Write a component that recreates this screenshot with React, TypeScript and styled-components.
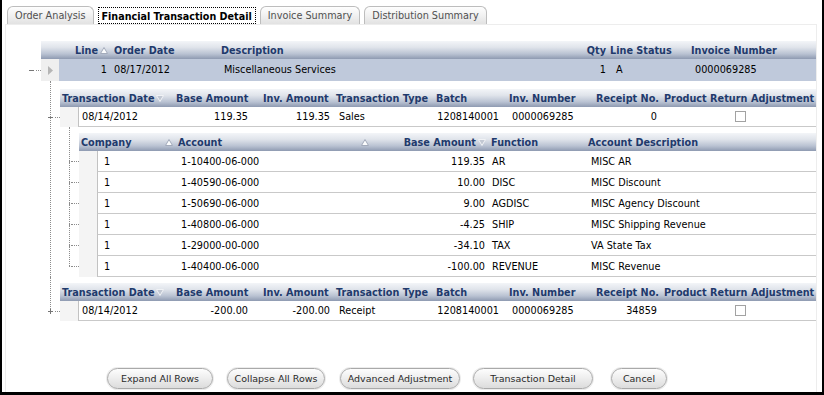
import React, { Fragment } from 'react'
import styled, { createGlobalStyle } from 'styled-components'

const GlobalStyle = createGlobalStyle`
  html, body { margin: 0; padding: 0; background: #fff; }
  body {
    font-family: 'DejaVu Sans', Verdana, sans-serif;
    font-size: 9.7px;
    color: #000;
  }
  * { box-sizing: border-box; }
`

type Align = 'l' | 'r' | 'c'
type Col = {
  label: string
  w: number
  ha?: Align
  da?: Align
  hp?: number
  hr?: number
  dp?: number
  sort?: 'up' | 'down'
  spread?: boolean
}

const GUT = 18
const jc = (a: Align = 'l') => (a === 'r' ? 'flex-end' : a === 'c' ? 'center' : 'flex-start')

// data rows start after the 18px gutter + 1px cell border
const template = (cols: Col[], data: boolean) =>
  cols
    .map((c, i) =>
      i === cols.length - 1 ? 'minmax(0, 1fr)' : `${data && i === 0 ? c.w - GUT - 1 : c.w}px`
    )
    .join(' ')

const Frame = styled.div`
  width: 824px;
  height: 395px;
  border-left: 2px solid #000;
  border-right: 2px solid #000;
  border-bottom: 3px solid #000;
  display: flex;
  flex-direction: column;
  overflow: hidden;
`

const TabBar = styled.div`
  height: 24px;
  flex: none;
  display: flex;
  align-items: flex-end;
  gap: 4px;
  padding-left: 5px;
`

const Tab = styled.div<{ $active?: boolean }>`
  height: ${p => (p.$active ? 17 : 18)}px;
  padding: 0 ${p => (p.$active ? 3 : 7)}px;
  display: flex;
  align-items: center;
  white-space: nowrap;
  border: 1px solid ${p => (p.$active ? 'transparent' : '#bdbdbd')};
  border-bottom: none;
  border-radius: ${p => (p.$active ? '0' : '6px 6px 0 0')};
  background: ${p => (p.$active ? '#fff' : 'linear-gradient(#fefefe, #f1f1f1 50%, #e2e2e2)')};
  color: ${p => (p.$active ? '#000' : '#505050')};
  font-weight: ${p => (p.$active ? 'bold' : 'normal')};
  font-size: ${p => (p.$active ? '9.6px' : '9.7px')};
  outline: ${p => (p.$active ? '1px dotted #000' : 'none')};
  outline-offset: -1px;
`

const Panel = styled.div`
  flex: 1;
  margin: 0 5px 0 3px;
  border: 1px solid #ededed;
  border-bottom: none;
  padding: 16px 0 3px 16px;
  display: flex;
  flex-direction: column;
`

const TreeItem = styled.div`
  display: flex;
`

const Branches = styled.div<{ $top?: number }>`
  flex: 1;
  min-width: 0;
  display: flex;
  flex-direction: column;
  padding-top: ${p => p.$top ?? 0}px;
`

const Stem = styled.div`
  width: 19px;
  flex: none;
  display: flex;
  flex-direction: column;
`

const StemLine = styled.div<{ $h?: number; $hidden?: boolean }>`
  margin-left: 9px;
  border-left: 1px dotted ${p => (p.$hidden ? 'transparent' : '#8c8c8c')};
  ${p => (p.$h !== undefined ? `height: ${p.$h}px; flex: none;` : 'flex: 1;')}
`

const Branch = styled.div<{ $hidden?: boolean }>`
  height: 1px;
  flex: none;
  margin-left: 9px;
  border-left: 1px dotted ${p => (p.$hidden ? 'transparent' : '#8c8c8c')};
  display: flex;
  align-items: center;
`

const Dots = styled.div<{ $gap: number }>`
  flex: 1;
  height: 0;
  margin-left: ${p => p.$gap}px;
  border-top: 1px dotted #8c8c8c;
`

const MarkBox = styled.svg`
  flex: none;
  margin-left: -3px;
`

const Mark = ({ plus }: { plus?: boolean }) => (
  <MarkBox width="5" height="5" viewBox="0 0 5 5">
    <rect x="0" y="2" width="5" height="1" fill="#767676" />
    {plus && <rect x="2" y="0" width="1" height="5" fill="#767676" />}
  </MarkBox>
)

const TableBox = styled.div`
  display: flex;
  flex-direction: column;
`

const HeadRow = styled.div<{ $cols: string }>`
  display: grid;
  grid-template-columns: ${p => p.$cols};
  height: 18px;
  background: linear-gradient(to bottom, #f3f5f8 0%, #e0e4eb 35%, #b9c2d2 72%, #8e9ab1 100%);
  color: #1f3a6c;
  font-weight: bold;
`

const HeadCell = styled.div<{ $align?: Align; $pl: number; $pr: number; $spread?: boolean }>`
  display: flex;
  align-items: center;
  gap: 2px;
  justify-content: ${p => (p.$spread ? 'space-between' : jc(p.$align))};
  padding: 0 ${p => p.$pr}px 0 ${p => p.$pl}px;
  white-space: nowrap;
  overflow: hidden;
`

const DataRow = styled.div<{ $h: number }>`
  display: flex;
  height: ${p => p.$h}px;
`

const Gutter = styled.div<{ $sel?: boolean }>`
  width: ${GUT}px;
  flex: none;
  display: flex;
  align-items: center;
  justify-content: center;
  background: ${p => (p.$sel ? '#efefef' : '#f4f4f4')};
`

const Cells = styled.div<{ $cols: string; $sel?: boolean }>`
  flex: 1;
  min-width: 0;
  display: grid;
  grid-template-columns: ${p => p.$cols};
  background: ${p => (p.$sel ? '#bfc9db' : '#fff')};
  border-left: 1px solid ${p => (p.$sel ? '#bfc9db' : '#c2c2c2')};
  border-bottom: 1px solid ${p => (p.$sel ? '#bfc9db' : '#c9c9c9')};
`

const Cell = styled.div<{ $align?: Align; $pad: number }>`
  display: flex;
  align-items: center;
  justify-content: ${p => jc(p.$align)};
  padding: 0 ${p => p.$pad}px;
  white-space: nowrap;
  overflow: hidden;
`

const Check = styled.span`
  width: 11px;
  height: 11px;
  flex: none;
  border: 1px solid #a2a2a2;
  background: #fff;
`

const ButtonRow = styled.div`
  margin-top: auto;
  display: flex;
  padding-left: 85px;
`

const Button = styled.button<{ $w: number; $ml: number }>`
  width: ${p => p.$w}px;
  margin-left: ${p => p.$ml}px;
  height: 21px;
  padding: 0;
  border-radius: 11px;
  border: 1px solid #a9a9a9;
  background: linear-gradient(#fdfdfd, #ededed 50%, #dcdcdc);
  box-shadow: 0 0 0 1px #ececec;
  font: 9.5px 'DejaVu Sans', Verdana, sans-serif;
  color: #2a2a2a;
  white-space: nowrap;
`

const SortIcon = ({ dir }: { dir: 'up' | 'down' }) => (
  <svg width="8" height="7" viewBox="0 0 8 7" style={{ flex: 'none' }}>
    {dir === 'up' ? (
      <polygon points="0.5,6.5 4,0.5 7.5,6.5" fill="#fbfcfd" stroke="#a3abbb" />
    ) : (
      <polygon points="0.5,0.5 7.5,0.5 4,6.5" fill="#c2c8d3" stroke="#f0f2f5" />
    )}
  </svg>
)

const Expander = () => (
  <svg width="5" height="9" viewBox="0 0 5 9">
    <polygon points="0,0 5,4.5 0,9" fill="#b5b5b5" />
  </svg>
)

type TableProps = {
  cols: Col[]
  rows: React.ReactNode[][]
  rowH: number
  sel?: boolean
  marker?: React.ReactNode
}

const Table = ({ cols, rows, rowH, sel, marker }: TableProps) => (
  <TableBox>
    <HeadRow $cols={template(cols, false)}>
      {cols.map(c => (
        <HeadCell
          key={c.label}
          $align={c.ha}
          $pl={c.hp ?? 3}
          $pr={c.hr ?? c.hp ?? 3}
          $spread={c.spread}
        >
          <span>{c.label}</span>
          {c.sort && <SortIcon dir={c.sort} />}
        </HeadCell>
      ))}
    </HeadRow>
    {rows.map((r, i) => (
      <DataRow key={i} $h={rowH}>
        <Gutter $sel={sel}>{marker}</Gutter>
        <Cells $cols={template(cols, true)} $sel={sel}>
          {r.map((v, j) => (
            <Cell key={j} $align={cols[j].da} $pad={cols[j].dp ?? 3}>
              {v}
            </Cell>
          ))}
        </Cells>
      </DataRow>
    ))}
  </TableBox>
)

const tabs = ['Order Analysis', 'Financial Transaction Detail', 'Invoice Summary', 'Distribution Summary']

const mainCols: Col[] = [
  { label: 'Line', w: 69, ha: 'r', da: 'r', hp: 2, dp: 3, sort: 'up' },
  { label: 'Order Date', w: 108, hp: 4, dp: 4 },
  { label: 'Description', w: 367, hp: 3, dp: 6 },
  { label: 'Qty', w: 22, ha: 'r', da: 'r', hp: 1, dp: 1 },
  { label: 'Line Status', w: 81, hp: 3, dp: 9 },
  { label: 'Invoice Number', w: 128, hp: 3, dp: 7 },
]

const transCols: Col[] = [
  { label: 'Transaction Date', w: 113, hp: 2, dp: 3, sort: 'down' },
  { label: 'Base Amount', w: 87, hp: 3, da: 'r', dp: 12 },
  { label: 'Inv. Amount', w: 73, hp: 3, da: 'r', dp: 3 },
  { label: 'Transaction Type', w: 101, hp: 3, dp: 6 },
  { label: 'Batch', w: 72, hp: 2, da: 'r', dp: 7 },
  { label: 'Inv. Number', w: 87, hp: 3, dp: 6 },
  { label: 'Receipt No.', w: 69, hp: 3, da: 'r', dp: 5 },
  { label: 'Product Return', w: 87, hp: 2, da: 'r', dp: 3 },
  { label: 'Adjustment', w: 67, hp: 2, dp: 3 },
]

const glCols: Col[] = [
  { label: 'Company', w: 96, hp: 2, dp: 6, sort: 'up', spread: true },
  { label: 'Account', w: 200, hp: 3, hr: 6, dp: 6, sort: 'up', spread: true },
  { label: 'Base Amount', w: 113, ha: 'r', hp: 2, da: 'r', dp: 3, sort: 'down' },
  { label: 'Function', w: 97, hp: 3, dp: 4 },
  { label: 'Account Description', w: 231, hp: 3, dp: 6 },
]

const glRows = [
  ['1', '1-10400-06-000', '119.35', 'AR', 'MISC AR'],
  ['1', '1-40590-06-000', '10.00', 'DISC', 'MISC Discount'],
  ['1', '1-50690-06-000', '9.00', 'AGDISC', 'MISC Agency Discount'],
  ['1', '1-40800-06-000', '-4.25', 'SHIP', 'MISC Shipping Revenue'],
  ['1', '1-29000-00-000', '-34.10', 'TAX', 'VA State Tax'],
  ['1', '1-40400-06-000', '-100.00', 'REVENUE', 'MISC Revenue'],
]

const buttons: [string, number, number][] = [
  ['Expand All Rows', 106, 0],
  ['Collapse All Rows', 98, 14],
  ['Advanced Adjustment', 120, 15],
  ['Transaction Detail', 120, 13],
  ['Cancel', 56, 18],
]

export default function App() {
  return (
    <>
      <GlobalStyle />
      <Frame>
        <TabBar>
          {tabs.map((t, i) => (
            <Tab key={t} $active={i === 1}>
              {t}
            </Tab>
          ))}
        </TabBar>
        <Panel>
          <TreeItem>
            <Stem>
              <StemLine $h={29} $hidden />
              <Branch $hidden>
                <Mark />
                <Dots $gap={2} />
              </Branch>
            </Stem>
            <Branches>
              <Table
                cols={mainCols}
                rowH={22}
                sel
                marker={<Expander />}
                rows={[['1', '08/17/2012', 'Miscellaneous Services', '1', 'A', '0000069285']]}
              />

              <TreeItem>
                <Stem>
                  <StemLine $h={36} />
                  <Branch>
                    <Mark />
                    <Dots $gap={2} />
                  </Branch>
                  <StemLine />
                </Stem>
                <Branches $top={8}>
                  <Table
                    cols={transCols}
                    rowH={20}
                    rows={[['08/14/2012', '119.35', '119.35', 'Sales', '1208140001', '0000069285', '0', <Check />, '']]}
                  />
                  <TreeItem>
                    <Stem>
                      <StemLine $h={34} />
                      {glRows.map((_, i) => (
                        <Fragment key={i}>
                          {i > 0 && <StemLine $h={20} />}
                          <Branch>
                            <Dots $gap={1} />
                          </Branch>
                        </Fragment>
                      ))}
                    </Stem>
                    <Branches $top={6}>
                      <Table cols={glCols} rowH={21} rows={glRows} />
                    </Branches>
                  </TreeItem>
                </Branches>
              </TreeItem>

              <TreeItem>
                <Stem>
                  <StemLine $h={34} />
                  <Branch>
                    <Mark plus />
                    <Dots $gap={2} />
                  </Branch>
                </Stem>
                <Branches $top={6}>
                  <Table
                    cols={transCols}
                    rowH={20}
                    rows={[['08/14/2012', '-200.00', '-200.00', 'Receipt', '1208140001', '0000069285', '34859', <Check />, '']]}
                  />
                </Branches>
              </TreeItem>
            </Branches>
          </TreeItem>

          <ButtonRow>
            {buttons.map(([label, w, ml]) => (
              <Button key={label} $w={w} $ml={ml}>
                {label}
              </Button>
            ))}
          </ButtonRow>
        </Panel>
      </Frame>
    </>
  )
}
